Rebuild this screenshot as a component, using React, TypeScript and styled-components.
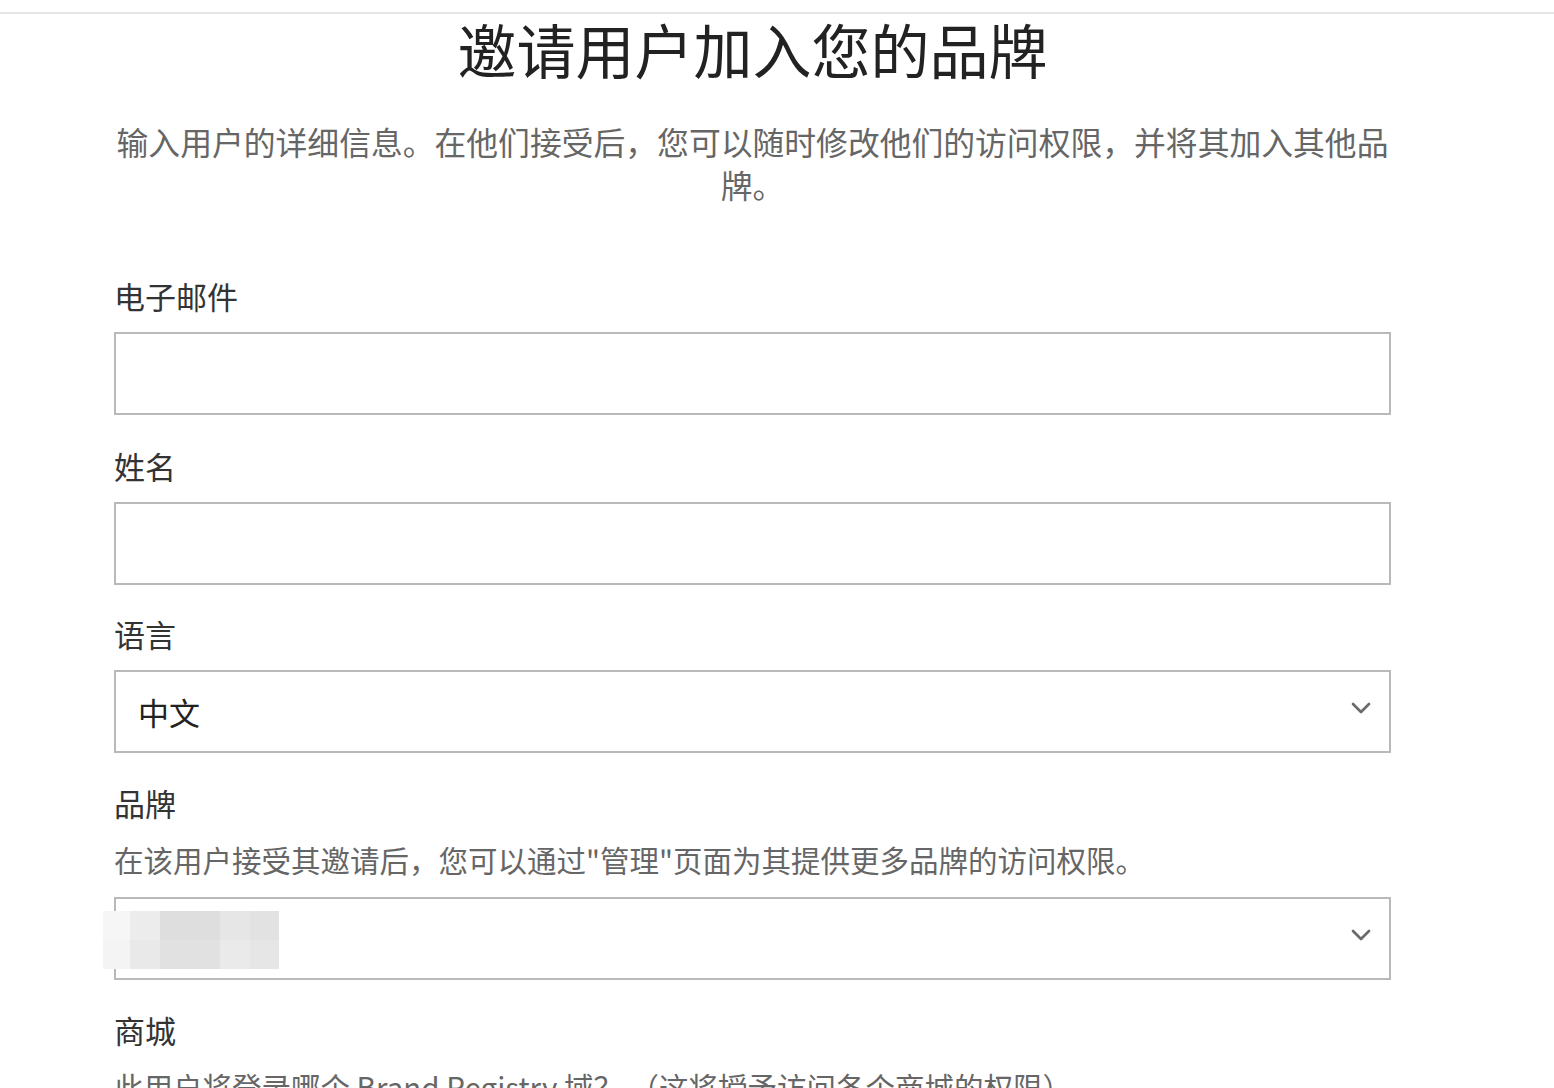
import React from 'react';
import styled, { createGlobalStyle } from 'styled-components';
import { ChevronDown } from 'lucide-react';

const GlobalStyle = createGlobalStyle`
  html, body {
    margin: 0;
    padding: 0;
    background: #fff;
    overflow: hidden;
  }
  body {
    font-family: "Noto Sans CJK SC", "Noto Sans", sans-serif;
    color: #333;
  }
`;

const TopRule = styled.div`
  height: 12px;
  border-bottom: 2px solid #e6e6e6;
`;

const Form = styled.div`
  width: 1277px;
  margin-left: 114px;
  display: flex;
  flex-direction: column;
`;

const Title = styled.h1`
  margin: 0;
  text-align: center;
  font-size: 59px;
  font-weight: 400;
  line-height: 70px;
  color: #222;
`;

const Intro = styled.p`
  margin: 36px 0 0;
  text-align: center;
  font-size: 31.8px;
  line-height: 43px;
  color: #666;
`;

const Field = styled.div`
  display: flex;
  flex-direction: column;
`;

const Label = styled.div`
  font-size: 31px;
  line-height: 40px;
  color: #333;
  margin-bottom: 16px;
`;

const Hint = styled.div`
  font-size: 29.5px;
  line-height: 40px;
  color: #666;
  margin: 0 0 18px;
`;

const Box = styled.div<{ $select?: boolean }>`
  position: relative;
  height: 83px;
  box-sizing: border-box;
  border: 2px solid #b9b9b9;
  background: #fff;
  display: flex;
  align-items: center;
  padding: 0 22px;
  font-size: 31px;
  color: #222;
  justify-content: ${p => (p.$select ? 'space-between' : 'flex-start')};
`;

const Chevron = styled(ChevronDown)`
  color: #6b6b6b;
  margin-right: -10px;
  margin-top: -8px;
`;

const Blur = styled.div`
  position: absolute;
  left: -13px;
  top: 12px;
  width: 176px;
  height: 58px;
  display: grid;
  grid-template-columns: 27px 30px 60px 30px 29px;
  grid-template-rows: 29px 29px;
`;

const Cell = styled.div<{ $c: string }>`
  background: ${p => p.$c};
`;

const Spacer = styled.div<{ $h: number }>`
  height: ${p => p.$h}px;
  flex: none;
`;

const blurCells = [
  '#f6f6f6', '#ececec', '#dedede', '#e6e6e6', '#e2e2e2',
  '#f4f4f4', '#e9e9e9', '#e1e1e1', '#eaeaea', '#e6e6e6',
];

export default function App() {
  return (
    <>
      <GlobalStyle />
      <TopRule />
      <Form>
        <Title>邀请用户加入您的品牌</Title>
        <Intro>
          输入用户的详细信息。在他们接受后，您可以随时修改他们的访问权限，并将其加入其他品牌。
        </Intro>
        <Spacer $h={70} />
        <Field>
          <Label>电子邮件</Label>
          <Box />
        </Field>
        <Spacer $h={31} />
        <Field>
          <Label>姓名</Label>
          <Box />
        </Field>
        <Spacer $h={29} />
        <Field>
          <Label>语言</Label>
          <Box $select>
            <span>中文</span>
            <Chevron size={32} strokeWidth={2} />
          </Box>
        </Field>
        <Spacer $h={30} />
        <Field>
          <Label>品牌</Label>
          <Hint>在该用户接受其邀请后，您可以通过"管理"页面为其提供更多品牌的访问权限。</Hint>
          <Box $select>
            <span />
            <Chevron size={32} strokeWidth={2} />
            <Blur>
              {blurCells.map((c, i) => (
                <Cell key={i} $c={c} />
              ))}
            </Blur>
          </Box>
        </Field>
        <Spacer $h={30} />
        <Field>
          <Label>商城</Label>
          <Hint>此用户将登录哪个 Brand Registry 域？ （这将授予访问各个商城的权限）</Hint>
        </Field>
      </Form>
    </>
  );
}
